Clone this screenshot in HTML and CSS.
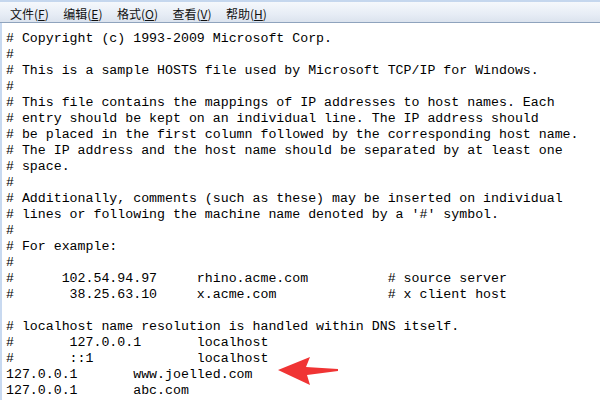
FILE: index.html
```html
<!DOCTYPE html>
<html lang="zh-CN">
<head>
    <meta charset="UTF-8">
    <title>hosts - 记事本</title>
    <link rel="stylesheet" href="styles.css">
</head>
<body>

<div class="window">
    <div class="menubar">
        <span class="menu-item">文件(<u>F</u>)</span>
        <span class="menu-item">编辑(<u>E</u>)</span>
        <span class="menu-item">格式(<u>O</u>)</span>
        <span class="menu-item">查看(<u>V</u>)</span>
        <span class="menu-item">帮助(<u>H</u>)</span>
    </div>
    <div class="editor">
<pre class="text"># Copyright (c) 1993-2009 Microsoft Corp.
#
# This is a sample HOSTS file used by Microsoft TCP/IP for Windows.
#
# This file contains the mappings of IP addresses to host names. Each
# entry should be kept on an individual line. The IP address should
# be placed in the first column followed by the corresponding host name.
# The IP address and the host name should be separated by at least one
# space.
#
# Additionally, comments (such as these) may be inserted on individual
# lines or following the machine name denoted by a '#' symbol.
#
# For example:
#
#      102.54.94.97     rhino.acme.com          # source server
#       38.25.63.10     x.acme.com              # x client host

# localhost name resolution is handled within DNS itself.
#       127.0.0.1       localhost
#       ::1             localhost
127.0.0.1       www.joelled.com
127.0.0.1       abc.com
127.0.0.1       ddd.com</pre>
        <svg class="arrow" width="64" height="30" viewBox="0 0 64 30">
            <path d="M2 13 L34 0 L30 10 L62 12 L62 14 L31 18 L34 28 Z" fill="#f03434"/>
        </svg>
    </div>
</div>

</body>
</html>
```

FILE: styles.css
```css
body {
    margin: 0;
    background: white;
    overflow: hidden;
}
.window {
    width: 600px;
    height: 400px;
    display: flex;
    flex-direction: column;
}
.menubar {
    height: 19px;
    padding: 3px 0 0 10px;
    border-top: 2px solid #c5d7ee;
    border-bottom: 1px solid #8fa3bd;
    background: linear-gradient(#f5f8fc, #e7edf6 60%, #dbe3ee);
    display: flex;
    align-items: center;
    gap: 14.5px;
    font-family: "Noto Sans CJK SC", sans-serif;
    font-size: 12px;
    color: #111;
}
.menu-item u {
    text-underline-offset: 1px;
}
.editor {
    position: relative;
    flex: 1;
    border-left: 2px solid #c8d9f0;
    padding: 8px 0 0 4px;
}
.text {
    margin: 0;
    font-family: "Liberation Mono", monospace;
    font-size: 13.25px;
    line-height: 16px;
    color: #000;
    white-space: pre;
}
.arrow {
    position: absolute;
    left: 274px;
    top: 334px;
}
```
